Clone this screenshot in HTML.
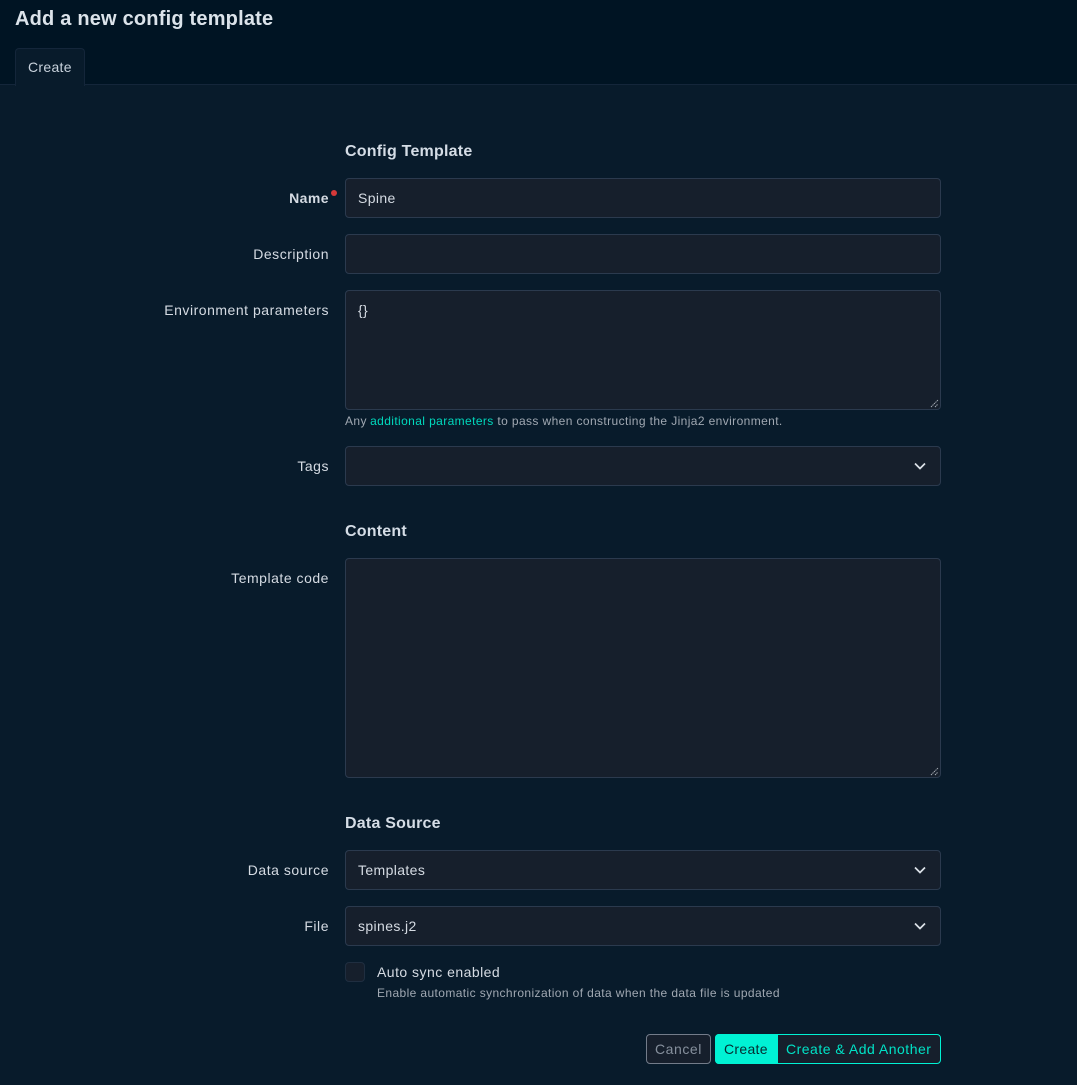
<!DOCTYPE html>
<html><head><meta charset="utf-8"><style>
html,body{margin:0;padding:0}
body{width:1077px;height:1085px;background:#081b2b;overflow:hidden;position:relative;font-family:"Liberation Sans",sans-serif;color:#dbe1e8;font-size:14px}
.t{position:absolute;white-space:nowrap;line-height:20px}
.l{position:absolute;right:748px;white-space:nowrap;line-height:20px;font-size:14px;letter-spacing:.52px;color:#d5dbe3}
.f{position:absolute;left:345px;width:594px;background:#161f2c;border:1px solid #2b3a4e;border-radius:4px;box-sizing:content-box}
.h{position:absolute;left:345px;font-size:16px;font-weight:bold;letter-spacing:.22px;line-height:20px;color:#d5dde6;white-space:nowrap}
.v{position:absolute;left:12px;top:9px;line-height:20px;font-size:14px;letter-spacing:.38px;color:#d5dbe3;white-space:nowrap}
.s{position:absolute;font-size:12px;letter-spacing:.39px;line-height:16px;color:#a0a8b2;white-space:nowrap}
svg{position:absolute}
</style></head><body>
<div style="position:absolute;left:0;top:0;width:1077px;height:84px;background:#001423;border-bottom:1px solid #14263a"></div>
<div class="t" style="left:15px;top:7px;font-size:20px;line-height:24px;font-weight:bold;letter-spacing:.2px;color:#dbe3ea">Add a new config template</div>
<div style="position:absolute;left:15px;top:48px;width:68px;height:37px;background:#081b2b;border:1px solid #14263a;border-bottom:none;border-radius:4px 4px 0 0"></div>
<div class="t" style="left:28px;top:57px;letter-spacing:.3px;color:#c8d2dc">Create</div>

<div class="h" style="top:142px">Config Template</div>
<div class="l" style="top:188px;font-weight:bold;letter-spacing:.45px">Name</div>
<div style="position:absolute;left:331px;top:190px;width:6px;height:6px;border-radius:50%;background:#d63939"></div>
<div class="f" style="top:178px;height:38px"><div class="v">Spine</div></div>

<div class="l" style="top:244px">Description</div>
<div class="f" style="top:234px;height:38px"></div>

<div class="l" style="top:300px">Environment parameters</div>
<div class="f" style="top:290px;height:118px"><div class="v">{}</div>
<svg style="right:1px;bottom:1px" width="9" height="9" viewBox="0 0 9 9"><path d="M1 8L8 1M5 8L8 5" stroke="#a8aeb6" stroke-width="1" stroke-dasharray="1.4 .7" fill="none"/></svg></div>
<div class="s" style="left:345px;top:413px">Any <span style="color:#00d9bd;margin-left:-.5px">additional parameters</span> to pass when constructing the Jinja2 environment.</div>

<div class="l" style="top:456px">Tags</div>
<div class="f" style="top:446px;height:38px"><svg style="left:567px;top:14px" width="14" height="10" viewBox="0 0 14 10"><path d="M2 2.5L7 7.5L12 2.5" stroke="#dbe1e8" stroke-width="1.7" fill="none"/></svg></div>

<div class="h" style="top:522px">Content</div>
<div class="l" style="top:568px">Template code</div>
<div class="f" style="top:558px;height:218px"><svg style="right:1px;bottom:1px" width="9" height="9" viewBox="0 0 9 9"><path d="M1 8L8 1M5 8L8 5" stroke="#a8aeb6" stroke-width="1" stroke-dasharray="1.4 .7" fill="none"/></svg></div>

<div class="h" style="top:814px">Data Source</div>
<div class="l" style="top:860px">Data source</div>
<div class="f" style="top:850px;height:38px"><div class="v">Templates</div><svg style="left:567px;top:14px" width="14" height="10" viewBox="0 0 14 10"><path d="M2 2.5L7 7.5L12 2.5" stroke="#dbe1e8" stroke-width="1.7" fill="none"/></svg></div>
<div class="l" style="top:916px">File</div>
<div class="f" style="top:906px;height:38px"><div class="v">spines.j2</div><svg style="left:567px;top:14px" width="14" height="10" viewBox="0 0 14 10"><path d="M2 2.5L7 7.5L12 2.5" stroke="#dbe1e8" stroke-width="1.7" fill="none"/></svg></div>

<div style="position:absolute;left:345px;top:962px;width:18px;height:18px;background:#161f2c;border:1px solid #1f2e40;border-radius:4px"></div>
<div class="t" style="left:377px;top:962px;letter-spacing:.47px;color:#d5dbe3">Auto sync enabled</div>
<div class="s" style="left:377px;top:985px">Enable automatic synchronization of data when the data file is updated</div>

<div style="position:absolute;left:646px;top:1034px;width:63px;height:28px;background:#161f2c;border:1px solid #737c8a;border-radius:4px"></div>
<div class="t" style="left:655px;top:1039px;letter-spacing:.55px;color:#86909d">Cancel</div>
<div style="position:absolute;left:715px;top:1034px;width:224px;height:28px;background:#161f2c;border:1px solid #00f2d4;border-radius:4px"></div>
<div style="position:absolute;left:715px;top:1034px;width:63px;height:30px;background:#00f2d4;border-radius:4px 0 0 4px"></div>
<div class="t" style="left:724px;top:1039px;letter-spacing:.3px;color:#062b2f">Create</div>
<div class="t" style="left:786px;top:1039px;letter-spacing:.5px;color:#00e2c6">Create &amp; Add Another</div>
</body></html>
